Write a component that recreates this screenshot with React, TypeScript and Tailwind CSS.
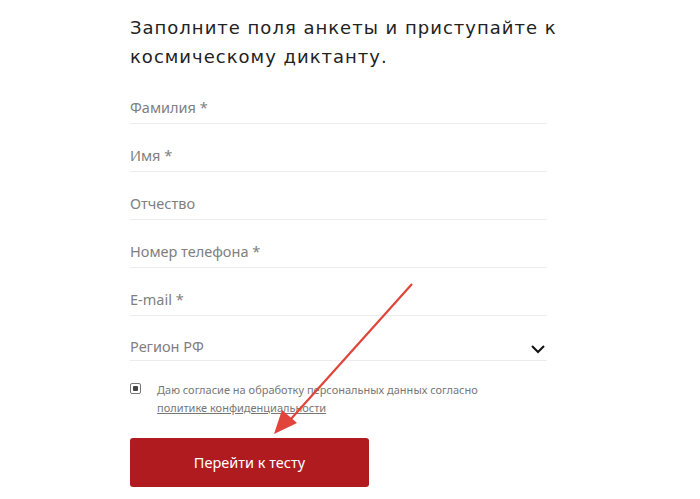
import React from "react";

const fields = ["Фамилия *", "Имя *", "Отчество", "Номер телефона *", "E-mail *"];

export default function App() {
  return (
    <div className="relative w-[700px] h-[499px] bg-white overflow-hidden" style={{ fontFamily: "'Noto Sans', sans-serif" }}>
      <div className="pl-[130px] pt-[13px] w-[547px] box-content">
        <h1 className="text-[18px] leading-[29px] tracking-[1px] text-[#222] font-normal" style={{ fontFamily: "'DejaVu Sans', sans-serif" }}>
          Заполните поля анкеты и приступайте к космическому диктанту.
        </h1>
        <div className="mt-[5px] flex flex-col w-[417px]">
          {fields.map((f) => (
            <div key={f} className="h-[48px] flex items-end border-b border-[#ececec] pb-[4px] text-[14.5px] text-[#808080]">
              {f}
            </div>
          ))}
          <div className="h-[45px] flex items-end justify-between border-b border-[#ececec] pb-[2px] text-[14.5px] text-[#808080]">
            <span>Регион РФ</span>
            <svg width="16" height="10" viewBox="0 0 16 10" className="mb-[4px] mr-[1px]">
              <path d="M2 2 L8 8 L14 2" fill="none" stroke="#111" strokeWidth="2" />
            </svg>
          </div>
          <div className="mt-[20px] flex items-start gap-[16px]">
            <div className="mt-[2px] w-[11px] h-[11px] border border-[#777] rounded-[2px] flex items-center justify-center shrink-0">
              <div className="w-[5px] h-[5px] bg-[#444] rounded-[1px]" />
            </div>
            <div className="text-[11px] leading-[18px] text-[#777]">
              Даю согласие на обработку персональных данных согласно
              <br />
              <span className="underline">политике конфиденциальности</span>
            </div>
          </div>
          <button className="mt-[21px] w-[239px] h-[49px] rounded-[3px] bg-[#b01b1f] text-white text-[14.5px] flex items-center justify-center">
            Перейти к тесту
          </button>
        </div>
      </div>
      <svg className="absolute left-0 top-0 pointer-events-none" width="700" height="499">
        <line x1="412" y1="284" x2="290" y2="420" stroke="#e0443a" strokeWidth="2.2" />
        <polygon points="274,434 282,410 297,423" fill="#e0443a" />
      </svg>
    </div>
  );
}
